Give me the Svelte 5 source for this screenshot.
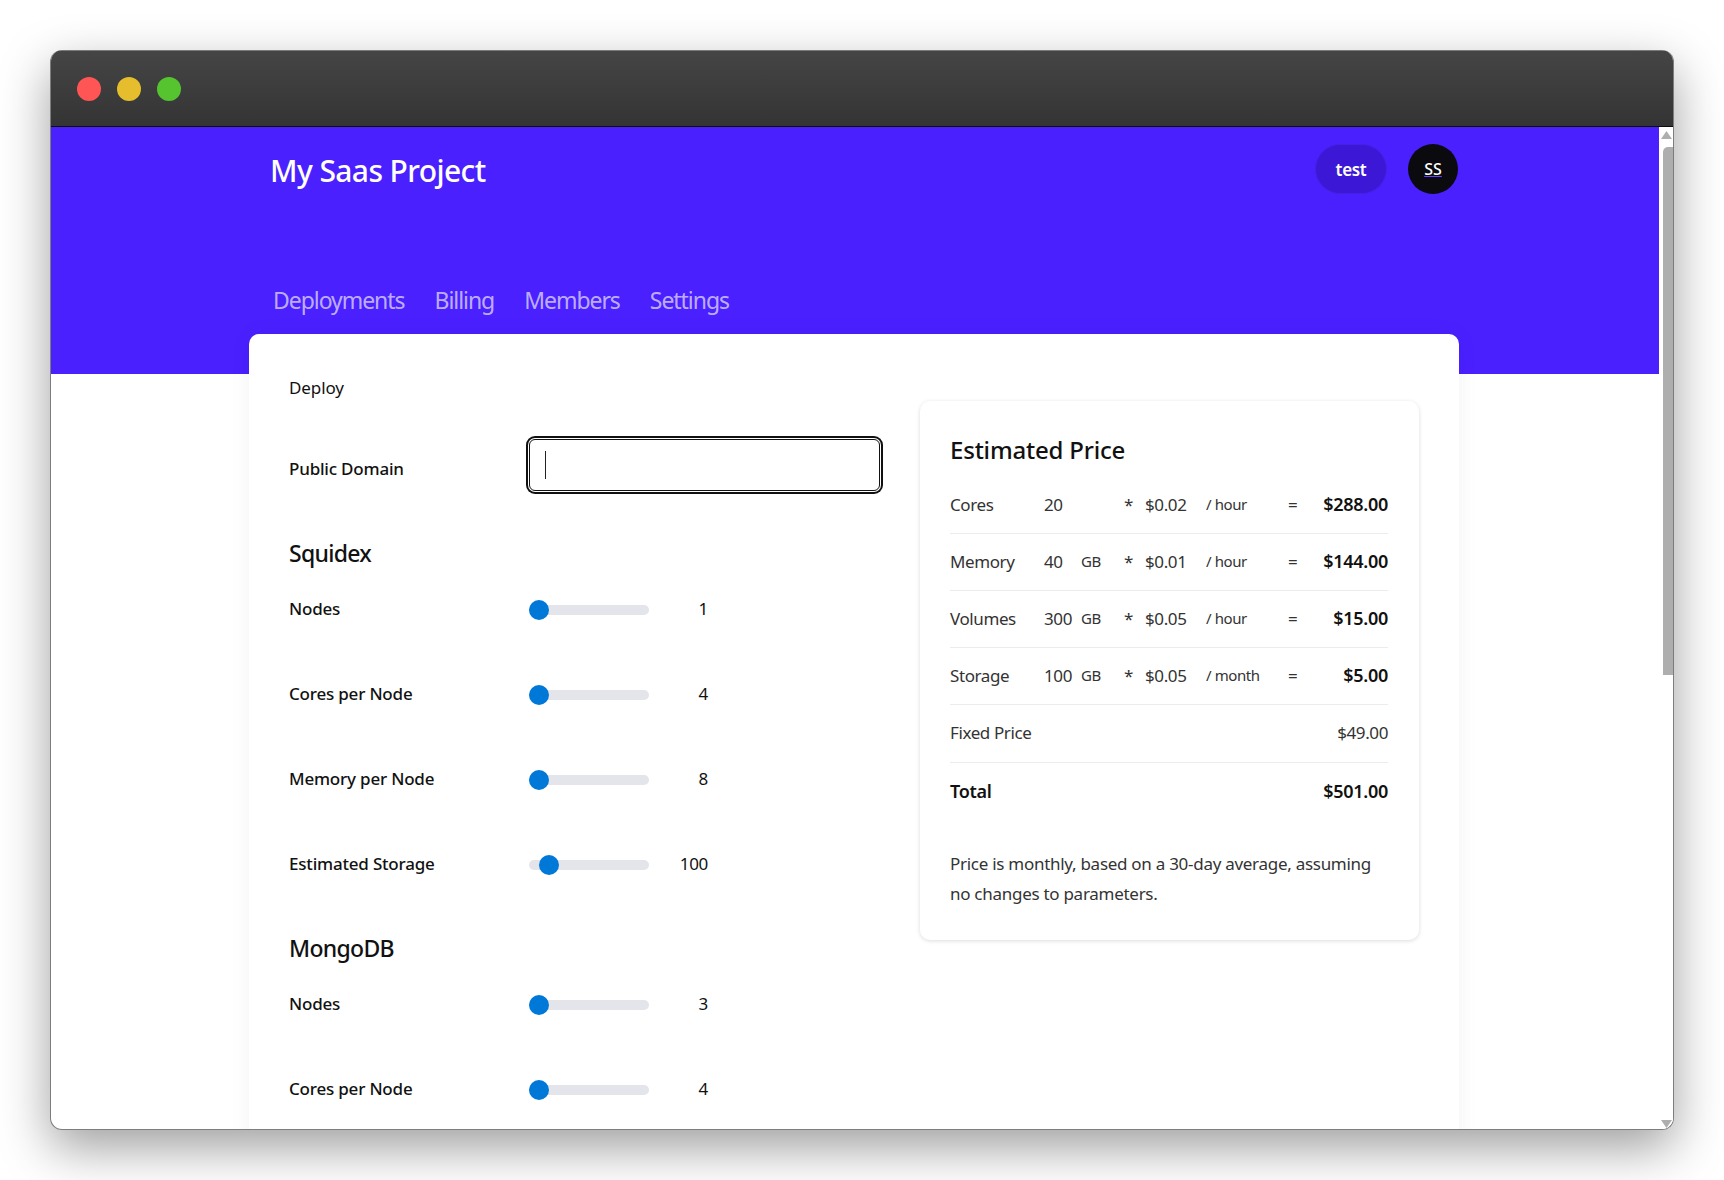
<script>
	const tabs = ['Deployments', 'Billing', 'Members', 'Settings'];

	const groups = [
		{
			title: 'Squidex',
			rows: [
				{ label: 'Nodes', value: 1, min: 1, max: 10 },
				{ label: 'Cores per Node', value: 4, min: 4, max: 32 },
				{ label: 'Memory per Node', value: 8, min: 8, max: 64 },
				{ label: 'Estimated Storage', value: 100, min: 0, max: 1000 }
			]
		},
		{
			title: 'MongoDB',
			rows: [
				{ label: 'Nodes', value: 3, min: 3, max: 9 },
				{ label: 'Cores per Node', value: 4, min: 4, max: 32 }
			]
		}
	];

	const prices = [
		{ name: 'Cores', qty: '20', unit: '', rate: '$0.02', per: '/ hour', total: '$288.00' },
		{ name: 'Memory', qty: '40', unit: 'GB', rate: '$0.01', per: '/ hour', total: '$144.00' },
		{ name: 'Volumes', qty: '300', unit: 'GB', rate: '$0.05', per: '/ hour', total: '$15.00' },
		{ name: 'Storage', qty: '100', unit: 'GB', rate: '$0.05', per: '/ month', total: '$5.00' }
	];
</script>

<div class="stage">
	<div class="window">
		<div class="titlebar">
			<span class="dot red"></span>
			<span class="dot yellow"></span>
			<span class="dot green"></span>
		</div>

		<div class="viewport">
			<div class="page">
				<header class="hero">
					<div class="topline">
						<div class="brand">My Saas Project</div>
						<div class="account">
							<button class="team">test</button>
							<button class="avatar"><u>SS</u></button>
						</div>
					</div>
					<nav class="tabs">
						{#each tabs as tab}
							<a href="#top">{tab}</a>
						{/each}
					</nav>
				</header>

				<main class="card">
					<section class="form">
						<div class="crumb">Deploy</div>
						<div class="domain">
							<label for="domain">Public Domain</label>
							<div class="input-wrap">
								<input id="domain" type="text" />
								<span class="caret"></span>
							</div>
						</div>

						{#each groups as group}
							<h3>{group.title}</h3>
							{#each group.rows as row}
								<div class="slider-row">
									<span class="name">{row.label}</span>
									<input class="slider" type="range" min={row.min} max={row.max} value={row.value} />
									<span class="val">{row.value}</span>
								</div>
							{/each}
						{/each}
					</section>

					<aside class="estimate">
						<h2>Estimated Price</h2>
						{#each prices as p}
							<div class="line">
								<span>{p.name}</span>
								<span>{p.qty}</span>
								<span class="small">{p.unit}</span>
								<span>*</span>
								<span>{p.rate}</span>
								<span class="small">{p.per}</span>
								<span>=</span>
								<strong>{p.total}</strong>
							</div>
						{/each}
						<div class="line simple fixed">
							<span>Fixed Price</span>
							<span>$49.00</span>
						</div>
						<div class="line simple last">
							<strong>Total</strong>
							<strong>$501.00</strong>
						</div>
						<p>Price is monthly, based on a 30-day average, assuming no changes to parameters.</p>
					</aside>
				</main>
			</div>

			<div class="scrollbar">
				<svg class="arrow" width="13" height="10" viewBox="0 0 13 10"><path d="M6.5 1L12 9H1z" fill="#aeaeae" /></svg>
				<div class="scroll-thumb"></div>
				<div class="spacer"></div>
				<svg class="arrow" width="13" height="10" viewBox="0 0 13 10"><path d="M6.5 9L12 1H1z" fill="#aeaeae" /></svg>
			</div>
		</div>
	</div>
</div>

<style>
	:global(body) {
		background: #fff;
		font-family: 'Noto Sans', 'Open Sans', sans-serif;
		color: #111;
		overflow: hidden;
	}

	.stage {
		height: 1180px;
		padding: 50px 50px 0 50px;
		box-sizing: border-box;
	}

	.window {
		height: 1080px;
		display: flex;
		flex-direction: column;
		border-radius: 12px;
		overflow: hidden;
		background: #fff;
		border: 1px solid #7d7d7d;
		border-top: 0;
		box-sizing: border-box;
		box-shadow: 0 18px 50px rgba(0, 0, 0, 0.38);
	}

	.titlebar {
		height: 77px;
		flex: none;
		box-sizing: border-box;
		display: flex;
		align-items: center;
		gap: 16px;
		padding: 0 0 0 26px;
		background: linear-gradient(#454545, #343434);
		border-top: 1px solid #7a7a7a;
		border-bottom: 1px solid #0c0c0c;
	}

	.dot {
		width: 24px;
		height: 24px;
		border-radius: 50%;
	}

	.red { background: #ff5555; }
	.yellow { background: #e6bd2c; }
	.green { background: #55c42f; }

	.viewport {
		flex: 1;
		display: flex;
		min-height: 0;
	}

	.page {
		flex: 1;
		min-width: 0;
		overflow: hidden;
	}

	.hero {
		height: 247px;
		box-sizing: border-box;
		background: #4a20ff;
		padding: 17px 200px 0;
	}

	.topline {
		display: flex;
		justify-content: space-between;
		padding-left: 19px;
	}

	.brand {
		color: #fff;
		font-size: 30px;
		font-weight: 500;
		letter-spacing: -0.6px;
		line-height: 54px;
	}

	.account {
		display: flex;
		align-items: center;
		gap: 21px;
		height: 50px;
	}

	.team {
		width: 72px;
		height: 50px;
		border-radius: 25px;
		border: 1px solid #4421e4;
		background: #3d17d6;
		color: #fff;
		font: 600 17px 'Noto Sans', sans-serif;
		letter-spacing: -0.3px;
		padding: 0;
	}

	.avatar {
		width: 50px;
		height: 50px;
		margin-right: 1px;
		border-radius: 50%;
		border: 0;
		background: #0a0a0f;
		color: #fff;
		font: 500 16px 'Noto Sans', sans-serif;
		padding: 0;
	}

	.avatar u {
		text-decoration-color: #6a45ff;
	}

	.tabs {
		display: flex;
		gap: 30px;
		margin-top: 86px;
		padding-left: 22px;
	}

	.tabs a {
		color: rgba(255, 255, 255, 0.65);
		font-size: 23px;
		letter-spacing: -1.05px;
		line-height: 32px;
		text-decoration: none;
	}

	.card {
		width: 1210px;
		height: 900px;
		margin: -40px 0 0 198px;
		box-sizing: border-box;
		background: #fff;
		border-radius: 10px 10px 0 0;
		box-shadow: 0 0 22px rgba(0, 0, 0, 0.05);
		display: flex;
		padding: 0 40px;
		gap: 37px;
	}

	.form {
		width: 594px;
		flex: none;
	}

	.crumb {
		font-size: 17px;
		letter-spacing: -0.1px;
		line-height: 24px;
		margin-top: 42px;
	}

	.domain {
		display: flex;
		align-items: center;
		height: 58px;
		margin-top: 36px;
	}

	label,
	.name {
		width: 237px;
		flex: none;
		font-size: 17px;
		font-weight: 500;
		letter-spacing: -0.2px;
	}

	label {
		position: relative;
		top: 3px;
	}

	.input-wrap {
		position: relative;
	}

	.input-wrap input {
		display: block;
		width: 351px;
		height: 52px;
		margin-left: 3px;
		box-sizing: border-box;
		border: 1px solid #111;
		border-radius: 6px;
		background: #fff;
		outline: none;
		box-shadow: 0 0 0 1px #fff, 0 0 0 3px #111;
	}

	.caret {
		position: absolute;
		left: 19px;
		top: 12px;
		width: 1px;
		height: 28px;
		background: #222;
	}

	h3 {
		margin: 42px 0 0;
		font-size: 23px;
		font-weight: 500;
		letter-spacing: -0.7px;
		line-height: 34px;
		height: 30px;
	}

	.slider-row {
		display: flex;
		align-items: center;
		height: 85px;
	}

	.slider-row + h3 {
		margin-top: 25px;
	}

	.slider {
		appearance: none;
		-webkit-appearance: none;
		width: 120px;
		height: 20px;
		margin: 2px 0 0 3px;
		background: transparent;
	}

	.slider::-webkit-slider-runnable-track {
		height: 10px;
		border-radius: 5px;
		background: #e4e5ea;
	}

	.slider::-webkit-slider-thumb {
		-webkit-appearance: none;
		width: 20px;
		height: 20px;
		margin-top: -5px;
		border-radius: 50%;
		background: #0078d7;
	}

	.val {
		width: 59px;
		text-align: right;
		font-size: 17px;
		letter-spacing: -0.3px;
	}

	.estimate {
		width: 499px;
		height: 539px;
		flex: none;
		margin-top: 67px;
		box-sizing: border-box;
		padding: 29px 31px 0 30px;
		border-radius: 10px;
		box-shadow: 0 1px 4px rgba(0, 0, 0, 0.14);
	}

	h2 {
		margin: 0 0 7px;
		font-size: 24px;
		font-weight: 500;
		letter-spacing: -0.2px;
		line-height: 40px;
	}

	.line {
		display: grid;
		grid-template-columns: 94px 37px 43px 21px 61px 82px 1fr auto;
		align-items: center;
		height: 57px;
		padding-bottom: 2px;
		box-sizing: border-box;
		border-bottom: 1px solid #ececec;
		font-size: 17px;
		letter-spacing: -0.4px;
		color: #333;
	}

	.line strong {
		color: #111;
		font-size: 18px;
		font-weight: 600;
		letter-spacing: -0.3px;
	}

	.small {
		font-size: 15px;
	}

	.simple {
		display: flex;
		justify-content: space-between;
	}

	.fixed {
		height: 58px;
	}

	.last {
		border-bottom: 0;
		height: 58px;
	}

	p {
		margin: 28px 0 0;
		font-size: 17px;
		letter-spacing: -0.28px;
		line-height: 30px;
		color: #333;
	}

	.scrollbar {
		width: 14px;
		flex: none;
		display: flex;
		flex-direction: column;
		padding-top: 3px;
		background: #fff;
	}

	.arrow {
		flex: none;
		display: block;
		margin-left: 1px;
	}

	.scroll-thumb {
		width: 10px;
		height: 528px;
		margin: 7px 0 0 4px;
		background: #aeaeae;
		border-radius: 5px 0 0 0;
	}

	.spacer {
		flex: 1;
	}
</style>
